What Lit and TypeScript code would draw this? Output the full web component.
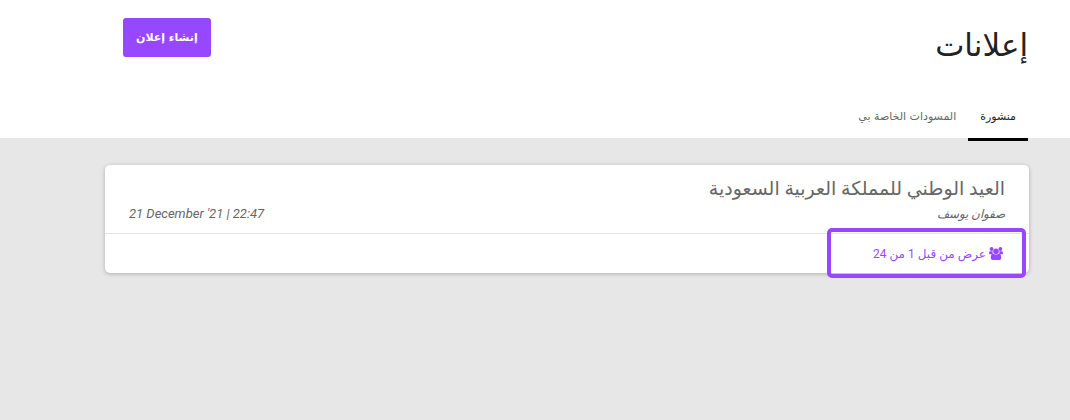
import { LitElement, html, css } from "lit";
import { customElement } from "lit/decorators.js";

interface Announcement {
  title: string;
  author: string;
  date: string;
  views: string;
}

const TABS = ["منشورة", "المسودات الخاصة بي"];

const ANNOUNCEMENTS: Announcement[] = [
  {
    title: "العيد الوطني للمملكة العربية السعودية",
    author: "صفوان يوسف",
    date: "21 December '21 | 22:47",
    views: "عرض من قبل 1 من 24",
  },
];

@customElement("announcement-card")
export class AnnouncementCard extends LitElement {
  static properties = { item: { attribute: false } };
  declare item: Announcement;

  static styles = css`
    :host {
      display: block;
      background: #fff;
      border-radius: 5px;
      box-shadow: 0 1px 4px rgba(0, 0, 0, 0.25);
      color: #666;
    }
    .summary {
      padding: 10px 24px 8px;
      border-bottom: 1px solid #e3e3e3;
    }
    .title {
      margin: 0;
      font-size: 19px;
      line-height: 28px;
      font-weight: 400;
    }
    .meta {
      display: flex;
      justify-content: space-between;
      font-size: 12px;
      line-height: 22px;
      font-style: italic;
    }
    .date {
      font-size: 13px;
    }
    .footer {
      position: relative;
      display: flex;
      align-items: center;
      height: 39px;
      padding: 0 26px;
    }
    .views {
      display: flex;
      align-items: center;
      gap: 3px;
      color: #9747ff;
      font-size: 12px;
      line-height: 20px;
      text-decoration: none;
    }
    .icon {
      width: 14px;
      height: 13px;
      fill: currentColor;
    }
    .highlight {
      position: absolute;
      top: -6px;
      bottom: -5px;
      right: 3px;
      width: 191px;
      border: 4px solid #9747ff;
      border-radius: 5px;
      pointer-events: none;
    }
  `;

  render() {
    return html`
      <div class="summary">
        <h2 class="title">${this.item.title}</h2>
        <div class="meta">
          <span>${this.item.author}</span>
          <time class="date" dir="ltr">${this.item.date}</time>
        </div>
      </div>
      <div class="footer">
        <a class="views" href="#views">
          <svg class="icon" viewBox="0 0 14 13" aria-hidden="true">
            <circle cx="2.6" cy="2" r="1.9" />
            <circle cx="11.4" cy="2" r="1.9" />
            <circle cx="7" cy="4.3" r="2.8" />
            <path d="M1.3 4.2C.3 4.2 0 5.1 0 6c0 .9.4 1.3 1 1.3h2.8C3.7 6.6 3.6 5.5 3.6 4.2Z" />
            <path d="M12.7 4.2c1 0 1.3.9 1.3 1.8 0 .9-.4 1.3-1 1.3h-2.8c.1-.7.2-1.8.2-3.1Z" />
            <path d="M4 6.6C2.300 6.800 1.800 8.500 1.800 11c0 1.300.7 2 2 2h6.400c1.300 0 2-.7 2-2 0-2.500-.5-4.200-2.200-4.400C9.200 7.100 8.200 7.500 7 7.500S4.800 7.100 4 6.600Z" />
          </svg>
          <span>${this.item.views}</span>
        </a>
        <div class="highlight"></div>
      </div>
    `;
  }
}

@customElement("app-root")
export class AppRoot extends LitElement {
  static properties = { active: { state: true } };
  declare active: number;

  constructor() {
    super();
    this.active = 0;
  }

  static styles = css`
    :host {
      display: block;
      direction: rtl;
      min-height: 100vh;
      background: #e7e7e7;
      font-family: Roboto, "DejaVu Sans", sans-serif;
    }
    .header {
      background: #fff;
      padding: 18px 42px 0 123px;
    }
    .bar {
      display: flex;
      justify-content: space-between;
      align-items: flex-start;
      height: 76px;
    }
    .heading {
      margin: 0;
      padding-top: 8px;
      font-size: 31px;
      line-height: 40px;
      font-weight: 400;
      color: #222;
    }
    .create {
      height: 39px;
      padding: 0 13px;
      border: 0;
      border-radius: 3px;
      background: #9747ff;
      color: #fff;
      font: 700 11px "DejaVu Sans", sans-serif;
    }
    .tabs {
      display: flex;
      height: 44px;
    }
    .tab {
      height: 47px;
      padding: 0 12px;
      border: 0;
      border-bottom: 3px solid transparent;
      background: none;
      color: #666;
      font: 400 11px "DejaVu Sans", sans-serif;
    }
    .tab[aria-selected="true"] {
      color: #222;
      border-bottom-color: #000;
    }
    .list {
      display: grid;
      gap: 16px;
      padding: 27px 41px 27px 105px;
    }
  `;

  render() {
    return html`
      <header class="header">
        <div class="bar">
          <h1 class="heading">إعلانات</h1>
          <button class="create" type="button">إنشاء إعلان</button>
        </div>
        <div class="tabs" role="tablist">
          ${TABS.map(
            (label, i) => html`<button
              class="tab"
              type="button"
              role="tab"
              aria-selected=${i === this.active ? "true" : "false"}
              @click=${() => (this.active = i)}
            >${label}</button>`
          )}
        </div>
      </header>
      <main class="list">
        ${ANNOUNCEMENTS.map((a) => html`<announcement-card .item=${a}></announcement-card>`)}
      </main>
    `;
  }
}
